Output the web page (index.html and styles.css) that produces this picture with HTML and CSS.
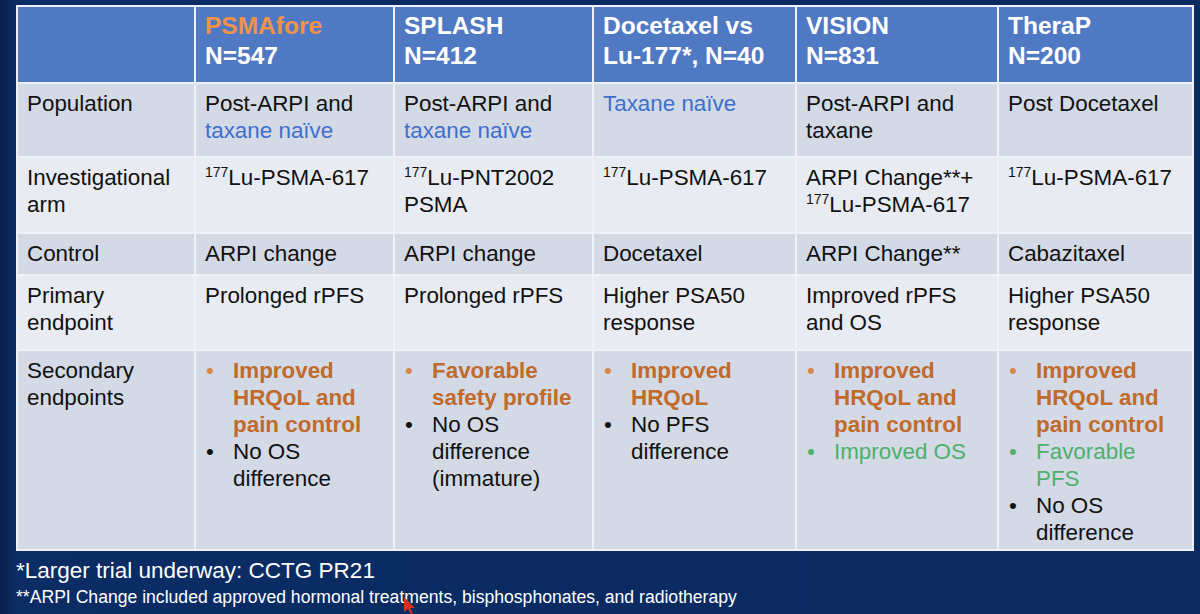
FILE: index.html
```html
<!DOCTYPE html>
<html>
<head>
<meta charset="utf-8">
<link rel="stylesheet" href="styles.css">
</head>
<body>
<div class="slide">
  <table class="trials">
    <colgroup>
      <col class="c1"><col class="c2"><col class="c3"><col class="c4"><col class="c5"><col class="c6">
    </colgroup>
    <thead>
      <tr class="head">
        <th></th>
        <th><span class="orange-h">PSMAfore</span><br>N=547</th>
        <th>SPLASH<br>N=412</th>
        <th>Docetaxel vs<br>Lu-177*, N=40</th>
        <th>VISION<br>N=831</th>
        <th>TheraP<br>N=200</th>
      </tr>
    </thead>
    <tbody>
      <tr class="dark r-pop">
        <td>Population</td>
        <td>Post-ARPI and<br><span class="blue">taxane naïve</span></td>
        <td>Post-ARPI and<br><span class="blue">taxane naïve</span></td>
        <td><span class="blue">Taxane naïve</span></td>
        <td>Post-ARPI and<br>taxane</td>
        <td>Post Docetaxel</td>
      </tr>
      <tr class="light r-inv">
        <td>Investigational<br>arm</td>
        <td><sup>177</sup>Lu-PSMA-617</td>
        <td><sup>177</sup>Lu-PNT2002<br>PSMA</td>
        <td><sup>177</sup>Lu-PSMA-617</td>
        <td>ARPI Change**+<br><sup>177</sup>Lu-PSMA-617</td>
        <td><sup>177</sup>Lu-PSMA-617</td>
      </tr>
      <tr class="dark r-ctl">
        <td>Control</td>
        <td>ARPI change</td>
        <td>ARPI change</td>
        <td>Docetaxel</td>
        <td>ARPI Change**</td>
        <td>Cabazitaxel</td>
      </tr>
      <tr class="light r-pri">
        <td>Primary<br>endpoint</td>
        <td>Prolonged rPFS</td>
        <td>Prolonged rPFS</td>
        <td>Higher PSA50<br>response</td>
        <td>Improved rPFS<br>and OS</td>
        <td>Higher PSA50<br>response</td>
      </tr>
      <tr class="dark r-sec">
        <td>Secondary<br>endpoints</td>
        <td>
          <ul class="bl">
            <li class="or">Improved HRQoL and pain control</li>
            <li>No OS difference</li>
          </ul>
        </td>
        <td>
          <ul class="bl">
            <li class="or">Favorable safety profile</li>
            <li>No OS difference (immature)</li>
          </ul>
        </td>
        <td>
          <ul class="bl">
            <li class="or">Improved HRQoL</li>
            <li>No PFS difference</li>
          </ul>
        </td>
        <td>
          <ul class="bl">
            <li class="or">Improved HRQoL and pain control</li>
            <li class="gr">Improved OS</li>
          </ul>
        </td>
        <td>
          <ul class="bl">
            <li class="or">Improved HRQoL and pain control</li>
            <li class="gr">Favorable PFS</li>
            <li>No OS difference</li>
          </ul>
        </td>
      </tr>
    </tbody>
  </table>
  <div class="notes">
    <p class="n1">*Larger trial underway: CCTG PR21</p>
    <p class="n2">**ARPI Change included approved hormonal treatments, bisphosphonates, and radiotherapy</p>
  </div>
  <svg class="cursor" width="14" height="18" viewBox="0 0 14 18"><path d="M1 1 L12 12 L7 12 L10 17 L8 18 L5 13 L1 16 Z" fill="#d8321c"/></svg>
</div>
</body>
</html>
```

FILE: styles.css
```css
html, body {
  margin: 0;
  padding: 0;
}
body {
  width: 1200px;
  height: 614px;
  overflow: hidden;
  background: #0a2a60;
  font-family: "Liberation Sans", Arial, sans-serif;
}
.slide {
  position: relative;
  width: 1200px;
  height: 614px;
  padding: 5px 0 0 16px;
  box-sizing: border-box;
  background: linear-gradient(90deg, #071f4c 0, #0b2c64 16px, #0a2a60 100%);
}
.trials {
  border-collapse: collapse;
  table-layout: fixed;
  width: 1176px;
}
.c1 { width: 178px; }
.c2 { width: 199px; }
.c3 { width: 199px; }
.c4 { width: 203px; }
.c5 { width: 202px; }
.c6 { width: 195px; }
.trials th, .trials td {
  border: 2px solid #eef1f7;
  text-align: left;
  vertical-align: top;
  padding: 6px 8px 0 9px;
  font-size: 22.4px;
  line-height: 27px;
  color: #111;
}
.trials th {
  background: #5079c4;
  color: #fff;
  font-weight: bold;
  font-size: 24.5px;
  line-height: 30px;
  padding-top: 4px;
}
.head { height: 77px; }
.orange-h { color: #f0934a; }
.dark td { background: #d3d9e5; }
.light td { background: #e8ebf1; }
.r-pop { height: 74px; }
.r-inv { height: 76px; }
.r-ctl { height: 42px; }
.r-pri { height: 75px; }
.r-sec { height: 200px; }
.blue { color: #3f6fcc; }
sup {
  font-size: 14px;
  line-height: 0;
  vertical-align: 8px;
}
.bl {
  list-style: none;
  margin: 0;
  padding: 0;
}
.bl li {
  position: relative;
  padding-left: 28px;
}
.bl li::before {
  content: "•";
  position: absolute;
  left: 1px;
  top: 0;
  font-weight: normal;
}
.bl li.or {
  color: #c06a2c;
  font-weight: bold;
}
.bl li.or::before { color: #d88848; }
.bl li.gr { color: #4fb06c; }
.notes {
  color: #fff;
  padding-top: 6px;
}
.notes p { margin: 0; }
.n1 {
  font-size: 22.5px;
  line-height: 28px;
}
.n2 {
  font-size: 17.6px;
  line-height: 24px;
}
.cursor {
  position: absolute;
  left: 403px;
  top: 596px;
}
```
